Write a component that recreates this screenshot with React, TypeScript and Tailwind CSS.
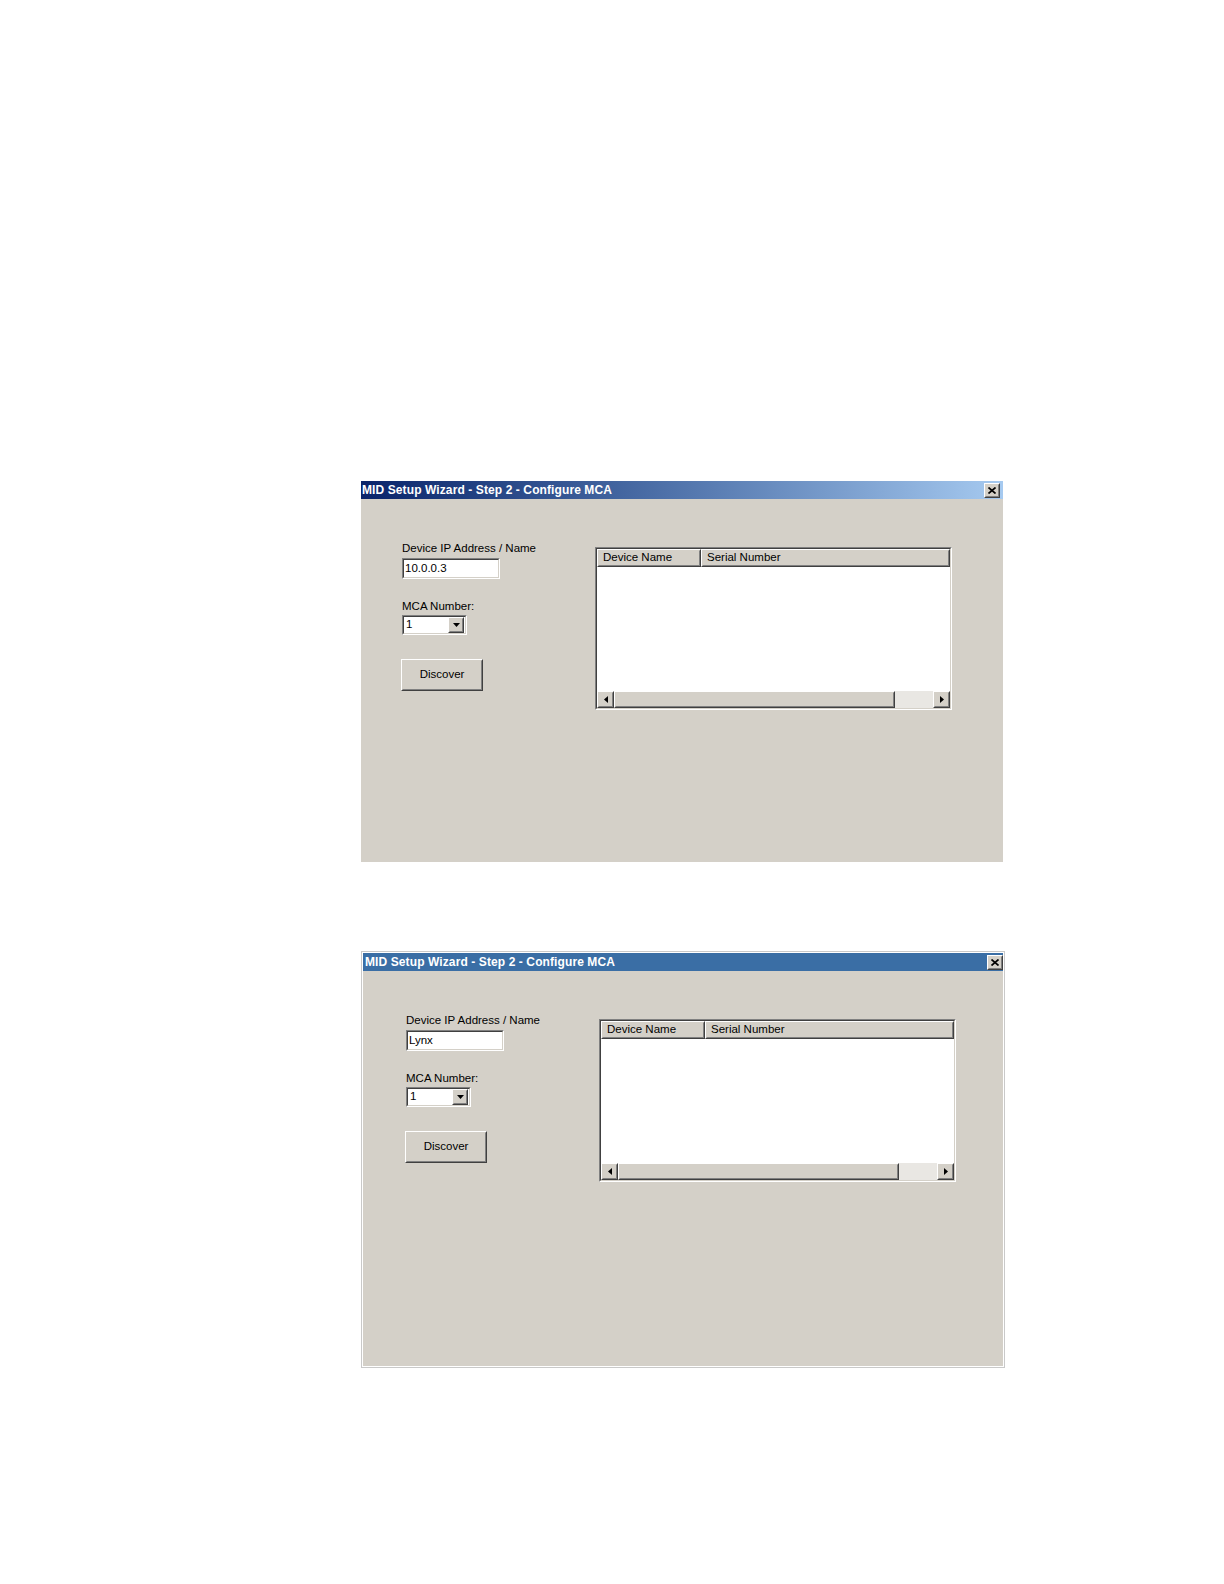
import type { ReactNode } from "react";

const ui = "font-['Liberation_Sans',Arial,sans-serif]";

function Raised({ className = "", inner = "", children }: { className?: string; inner?: string; children?: ReactNode }) {
  return (
    <div className={`border border-t-white border-l-white border-b-[#404040] border-r-[#404040] ${className}`}>
      <div className={`h-full w-full border border-t-[#d4d0c8] border-l-[#d4d0c8] border-b-[#808080] border-r-[#808080] bg-[#d4d0c8] ${inner}`}>
        {children}
      </div>
    </div>
  );
}

function Sunken({ className = "", inner = "", children }: { className?: string; inner?: string; children?: ReactNode }) {
  return (
    <div className={`border border-t-[#808080] border-l-[#808080] border-b-white border-r-white ${className}`}>
      <div className={`h-full w-full border border-t-[#404040] border-l-[#404040] border-b-[#d4d0c8] border-r-[#d4d0c8] ${inner}`}>
        {children}
      </div>
    </div>
  );
}

function CloseButton() {
  return (
    <Raised className="w-[16px] h-[15px]" inner="flex items-center justify-center">
      <svg width="8" height="7" viewBox="0 0 8 7">
        <path d="M0.5 0.5 L7.5 6.5 M7.5 0.5 L0.5 6.5" stroke="#000" strokeWidth="1.7" />
      </svg>
    </Raised>
  );
}

function Arrow({ dir }: { dir: "left" | "right" | "down" }) {
  if (dir === "down")
    return (
      <svg width="7" height="4" viewBox="0 0 7 4">
        <polygon points="0,0 7,0 3.5,4" fill="#000" />
      </svg>
    );
  return (
    <svg width="4" height="7" viewBox="0 0 4 7">
      <polygon points={dir === "left" ? "4,0 4,7 0,3.5" : "0,0 0,7 4,3.5"} fill="#000" />
    </svg>
  );
}

function DeviceList() {
  return (
    <Sunken className="w-[357px] h-[163px]" inner="flex flex-col bg-white">
      <div className="flex h-[18px] leading-none text-black">
        <Raised className="w-[104px]" inner="flex items-center pl-[4px]">
          Device Name
        </Raised>
        <Raised className="flex-1" inner="flex items-center pl-[4px]">
          Serial Number
        </Raised>
      </div>
      <div className="flex-1 bg-white" />
      <div className="flex h-[17px] bg-[#d4d0c8]">
        <Raised className="w-[17px]" inner="flex items-center justify-center">
          <Arrow dir="left" />
        </Raised>
        <Raised className="w-[281px]" />
        <div className="flex-1 bg-[#e9e7e3]" />
        <Raised className="w-[17px]" inner="flex items-center justify-center">
          <Arrow dir="right" />
        </Raised>
      </div>
    </Sunken>
  );
}

function Dialog({ solid, ip }: { solid?: boolean; ip: string }) {
  const title = solid
    ? "h-[18px] bg-[#3a6ea5] pl-[2px] pr-0"
    : "h-[18px] bg-gradient-to-r from-[#0a246a] to-[#a6caf0] pl-[1px] pr-[3px]";
  const body = solid ? "h-[395px] pl-[43px] pt-[42px]" : "h-[363px] pl-[41px] pt-[42px]";
  return (
    <div className="flex flex-col w-full">
      <div className={`flex items-center justify-between ${title}`}>
        <span className="text-white font-bold text-[12px] leading-none tracking-[0.1px]">
          MID Setup Wizard - Step 2 - Configure MCA
        </span>
        <CloseButton />
      </div>
      <div className={`flex items-start bg-[#d4d0c8] text-black text-[11.5px] ${body}`}>
        <div className="flex flex-col w-[193px] shrink-0">
          <div className="leading-[14px]">Device IP Address / Name</div>
          <Sunken className="mt-[3px] w-[98px] h-[21px]" inner="flex items-center bg-white pl-[1px]">
            {ip}
          </Sunken>
          <div className="leading-[14px] mt-[20px]">MCA Number:</div>
          <Sunken className="mt-[2px] w-[65px] h-[20px]" inner="flex items-center justify-between bg-white pl-[2px] pr-[1px]">
            <span>1</span>
            <Raised className="w-[16px] h-[16px]" inner="flex items-center justify-center">
              <Arrow dir="down" />
            </Raised>
          </Sunken>
          <Raised className="mt-[24px] -ml-[1px] w-[82px] h-[32px]" inner="flex items-center justify-center">
            Discover
          </Raised>
        </div>
        <div className="mt-[6px]">
          <DeviceList />
        </div>
      </div>
    </div>
  );
}

export default function App() {
  return (
    <div className={`w-[1224px] h-[1584px] bg-white pt-[481px] ${ui}`}>
      <div className="ml-[361px] w-[642px]">
        <Dialog ip="10.0.0.3" />
      </div>
      <div className="ml-[361px] mt-[89px] w-[644px] border border-[#c9c9c9] p-[1px] bg-white">
        <Dialog solid ip="Lynx" />
      </div>
    </div>
  );
}
